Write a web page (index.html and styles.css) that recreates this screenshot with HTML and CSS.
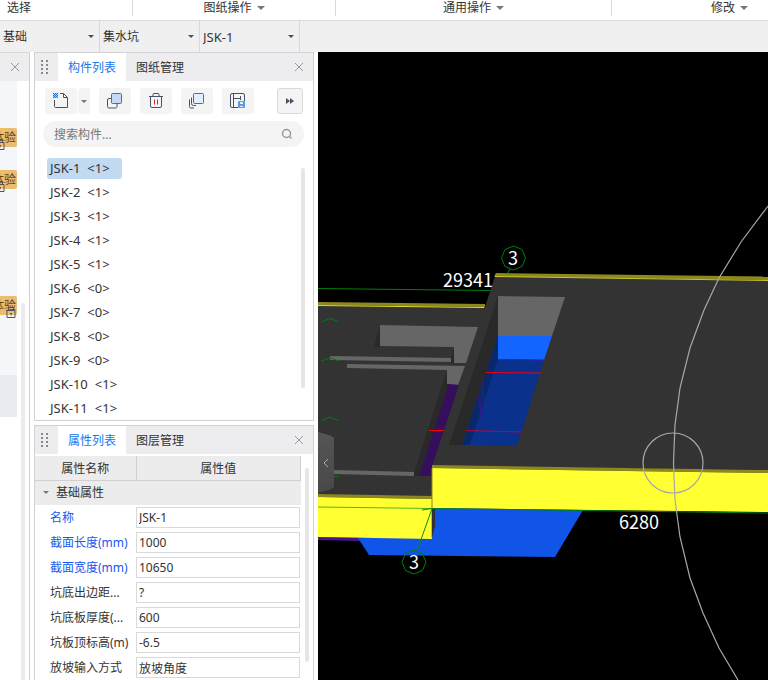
FILE: index.html
```html
<!DOCTYPE html>
<html lang="zh-CN">
<head>
    <meta charset="UTF-8">
    <title>构件建模</title>
    <link rel="stylesheet" href="styles.css">
</head>
<body>
<header class="ribbon">
    <div class="ribbon-group first"><span>选择</span></div>
    <div class="ribbon-group"><button class="ribbon-btn">图纸操作<i class="caret"></i></button></div>
    <div class="ribbon-group"><button class="ribbon-btn">通用操作<i class="caret"></i></button></div>
    <div class="ribbon-group last"><button class="ribbon-btn">修改<i class="caret"></i></button></div>
</header>

<div class="selector-bar">
    <label class="combo"><select aria-label="构件大类"><option>基础</option></select></label>
    <label class="combo"><select aria-label="构件类型"><option>集水坑</option></select></label>
    <label class="combo latin"><select aria-label="构件"><option>JSK-1</option></select></label>
</div>

<main class="workspace">
    <!-- 导航栏 -->
    <aside class="rail">
        <div class="rail-head">
            <button class="close" aria-label="关闭"><svg width="10" height="10" viewBox="0 0 10 10"><path d="M1 1l8 8M9 1l-8 8"/></svg></button>
        </div>
        <div class="rail-body">
            <ul class="rail-list">
                <li></li>
                <li><span class="badge">体验</span><svg class="lock cut" width="10" height="11" viewBox="0 0 10 11"><path d="M2.500 3.500v-3h5v3M1 3.500h8v7h-8zM5 6v2.500M4 6.500h2"/></svg></li>
                <li><span class="badge">体验</span><svg class="lock cut" width="10" height="11" viewBox="0 0 10 11"><path d="M2.500 3.500v-3h5v3M1 3.500h8v7h-8zM5 6v2.500M4 6.500h2"/></svg></li>
                <li></li>
                <li></li>
                <li><span class="badge">体验</span><svg class="lock" width="10" height="11" viewBox="0 0 10 11"><path d="M2.500 3.500v-3h5v3M1 3.500h8v7h-8zM5 6v2.500M4 6.500h2"/></svg></li>
                <li></li>
                <li class="current"></li>
            </ul>
            <div class="rail-scroll"></div>
        </div>
    </aside>

    <div class="panels">
        <!-- 构件列表 -->
        <section class="panel list-panel">
            <div class="panel-head">
                <svg class="grip" width="7" height="14" viewBox="0 0 7 14"><path d="M0 0h2v2H0zM5 0h2v2H5zM0 4h2v2H0zM5 4h2v2H5zM0 8h2v2H0zM5 8h2v2H5zM0 12h2v2H0zM5 12h2v2H5z"/></svg>
                <button class="tab active">构件列表</button>
                <button class="tab">图纸管理</button>
                <button class="close" aria-label="关闭"><svg width="10" height="10" viewBox="0 0 10 10"><path d="M1 1l8 8M9 1l-8 8"/></svg></button>
            </div>
            <div class="toolbar">
                <div class="split">
                    <button class="tool" aria-label="新建">
                        <svg width="18" height="18" viewBox="0 0 18 18"><path class="ink" d="M2.500 8v6.500a1 1 0 0 0 1 1h12v-10l-4-4H8M11.500 1.500v4h4"/><path class="dots-back" d="M1 1h5v5H1z"/><path class="dots" d="M1 1h1v1H1zM3 1h1v1H3zM5 1h1v1H5zM2 2h1v1H2zM4 2h1v1H4zM1 3h1v1H1zM3 3h1v1H3zM5 3h1v1H5zM2 4h1v1H2zM4 4h1v1H4zM1 5h1v1H1zM3 5h1v1H3zM5 5h1v1H5z"/></svg>
                    </button>
                    <button class="tool drop" aria-label="更多新建"><i class="caret small"></i></button>
                </div>
                <button class="tool" aria-label="复制">
                    <svg width="18" height="18" viewBox="0 0 18 18"><path class="ink" d="M5 6.500H3a1.500 1.500 0 0 0-1.500 1.500v6.500A1.500 1.500 0 0 0 3 16h6.500a1.500 1.500 0 0 0 1.500-1.500V12"/><rect class="copy-fill" x="5.500" y="1.500" width="10" height="10" rx="1"/></svg>
                </button>
                <button class="tool" aria-label="删除">
                    <svg width="18" height="18" viewBox="0 0 18 18"><path class="ink" d="M2 4.500h14M6 4.500v-2a1 1 0 0 1 1-1h4a1 1 0 0 1 1 1v2M3.500 4.500V14a1.500 1.500 0 0 0 1.500 1.500h8a1.500 1.500 0 0 0 1.500-1.500V4.500"/><path class="red" d="M7.500 7.500v5M10.500 7.500v5"/></svg>
                </button>
                <button class="tool" aria-label="层间复制">
                    <svg width="18" height="18" viewBox="0 0 18 18"><path class="ink" d="M1.500 7.500v7a1.500 1.500 0 0 0 1.500 1.500h3M3.500 5.500v6a2 2 0 0 0 2 2H8"/><rect class="layer-fill" x="5.500" y="1.500" width="10" height="10" rx="1"/></svg>
                </button>
                <button class="tool" aria-label="存档">
                    <svg width="18" height="18" viewBox="0 0 18 18"><path class="ink" d="M9 15.500H3A1.500 1.500 0 0 1 1.500 14V3A1.500 1.500 0 0 1 3 1.500h11A1.500 1.500 0 0 1 15.500 3v6M4.500 2v13M4.500 6.500h7M11.500 4v4"/><path class="save" d="M9.500 9.500h6v6h-6z"/><path class="save-mark" d="M11 10h3v2h-3zM11 14h3v1h-3z"/></svg>
                </button>
                <button class="tool more" aria-label="更多">
                    <svg width="8" height="6" viewBox="0 0 8 6"><path d="M0 0l4 3-4 3zM4 0l4 3-4 3z"/></svg>
                </button>
            </div>
            <label class="search">
                <input type="text" placeholder="搜索构件..." aria-label="搜索构件">
                <svg width="12" height="12" viewBox="0 0 12 12"><circle cx="5.500" cy="5.500" r="4"/><path d="M8.500 8.500l2 2"/></svg>
            </label>
            <div class="list-wrap">
                <ul class="items">
                    <li class="selected"><span>JSK-1</span><span>&lt;1&gt;</span></li>
                    <li><span>JSK-2</span><span>&lt;1&gt;</span></li>
                    <li><span>JSK-3</span><span>&lt;1&gt;</span></li>
                    <li><span>JSK-4</span><span>&lt;1&gt;</span></li>
                    <li><span>JSK-5</span><span>&lt;1&gt;</span></li>
                    <li><span>JSK-6</span><span>&lt;0&gt;</span></li>
                    <li><span>JSK-7</span><span>&lt;0&gt;</span></li>
                    <li><span>JSK-8</span><span>&lt;0&gt;</span></li>
                    <li><span>JSK-9</span><span>&lt;0&gt;</span></li>
                    <li><span>JSK-10</span><span>&lt;1&gt;</span></li>
                    <li><span>JSK-11</span><span>&lt;1&gt;</span></li>
                </ul>
                <div class="scroll-thumb list-thumb"></div>
            </div>
        </section>

        <!-- 属性列表 -->
        <section class="panel prop-panel">
            <div class="panel-head">
                <svg class="grip" width="7" height="14" viewBox="0 0 7 14"><path d="M0 0h2v2H0zM5 0h2v2H5zM0 4h2v2H0zM5 4h2v2H5zM0 8h2v2H0zM5 8h2v2H5zM0 12h2v2H0zM5 12h2v2H5z"/></svg>
                <button class="tab active">属性列表</button>
                <button class="tab">图层管理</button>
                <button class="close" aria-label="关闭"><svg width="10" height="10" viewBox="0 0 10 10"><path d="M1 1l8 8M9 1l-8 8"/></svg></button>
            </div>
            <div class="prop-wrap">
                <table class="props">
                    <thead>
                    <tr><th class="col-name">属性名称</th><th>属性值</th></tr>
                    </thead>
                    <tbody>
                    <tr class="group"><td colspan="2"><i class="caret small"></i>基础属性</td></tr>
                    <tr><td class="key"><label for="p1">名称</label></td><td><input id="p1" type="text" value="JSK-1"></td></tr>
                    <tr><td class="key"><label for="p2">截面长度(mm)</label></td><td><input id="p2" type="text" value="1000"></td></tr>
                    <tr><td class="key"><label for="p3">截面宽度(mm)</label></td><td><input id="p3" type="text" value="10650"></td></tr>
                    <tr><td><label for="p4">坑底出边距...</label></td><td><input id="p4" type="text" value="?"></td></tr>
                    <tr><td><label for="p5">坑底板厚度(...</label></td><td><input id="p5" type="text" value="600"></td></tr>
                    <tr><td><label for="p6">坑板顶标高(m)</label></td><td><input id="p6" type="text" value="-6.5"></td></tr>
                    <tr><td><label for="p7">放坡输入方式</label></td><td><input id="p7" type="text" value="放坡角度"></td></tr>
                    </tbody>
                </table>
                <div class="scroll-thumb prop-thumb"></div>
            </div>
        </section>
    </div>

    <!-- 三维视图 -->
    <section class="viewport">
        <svg class="scene" viewBox="318 52 450 628" preserveAspectRatio="xMinYMin slice">
            <path d="M318 288.500L491 290.500" stroke="#007d0c"/>
            <!-- 筏板 -->
            <polygon points="495,276 768,280 768,470 432,466 432,497 318,495 318,305 485,307" fill="#333"/>
            <polygon points="318,302 485,304 485,307 318,305" fill="#8c871f"/>
            <path d="M318 305.500L484 307.500" stroke="#e0dc28"/>
            <polygon points="496,273 768,276.500 768,280 494,276.500" fill="#8c871f"/>
            <path d="M495 276.500L768 280.500" stroke="#c8c428"/>
            <!-- 左侧坑 -->
            <polygon points="380,325 478,327 466,363 454,363 454,347 380,346" fill="#666"/>
            <polygon points="380,326 380,347 374,347" fill="#292929"/>
            <polygon points="454,348 454,363 451,363 451,358" fill="#292929"/>
            <polygon points="330,356 451,358 451,362 330,360" fill="#666"/>
            <polygon points="347,364 465,366 458,385 447,384 447,370 347,368" fill="#666"/>
            <polygon points="447,370 447,390 419,476 413,476" fill="#292929"/>
            <polygon points="447,384 459,385 432,466 432,476 419,476 447,390" fill="#350f5c"/>
            <polygon points="334,470 414,472 414,476 334,474" fill="#666"/>
            <!-- 右侧集水坑 -->
            <polygon points="498,296 498,336 462,445 449,445" fill="#292929"/>
            <polygon points="498,296 565,297 552,336 498,336" fill="#666"/>
            <polygon points="498,336 552,336 544,360 498,359" fill="#1464ff"/>
            <polygon points="498,336 498,359 470,445 462,445" fill="#08286e"/>
            <polygon points="498,359 544,360 517,446 470,445" fill="#0a328c"/>
            <path d="M498 359.500L544 360" stroke="#3a22b0"/>
            <path d="M483 380L484 409L479 418M482 383L480 420M478 395L480 408" stroke="#3a1888" fill="none"/>
            <path d="M486 372.500L541 373" stroke="#f00014"/>
            <path d="M429 430.500H444" stroke="#f00"/>
            <path d="M466 430.500L522 432" stroke="#b00c38"/>
            <!-- 侧面 -->
            <polygon points="318,537 360,538 360,541 318,540" fill="#4b1490"/>
            <polygon points="432,508 583,510 555,557 369,555 358,538 432,538" fill="#1155e8"/>
            <polygon points="318,494 432,496 432,499 318,497" fill="#8c871f"/>
            <polygon points="318,497 432,499 432,539 318,537" fill="#ffff32"/>
            <polygon points="432,465 768,470 768,473 432,468" fill="#8c871f"/>
            <polygon points="432,468 768,473 768,512 432,508" fill="#ffff32"/>
            <path d="M432 468V538" stroke="#8c871f"/>
            <polygon points="432,509 435,509 435,526 432,538" fill="#332e38"/>
            <path d="M318 507L432 508.500" stroke="#55b41e"/>
            <path d="M432 508.500L768 513" stroke="#007d28"/>
            <path d="M422 510L432 508.500L417 551M510 269L508 273" stroke="#0a8c14" fill="none"/>
            <g stroke="#007d0c" fill="none">
                <path d="M321 322L330 318.500L339 322M321 361L330 358L339 361M321 421L330 417L339 421M334 476L339 477"/>
                <polygon points="513.500,246 522,249.500 525.500,258 522,266.500 513.500,270 505,266.500 501.500,258 505,249.500"/>
                <polygon points="414,550 422.500,553.500 426,562 422.500,570.500 414,574 405.500,570.500 402,562 405.500,553.500"/>
            </g>
            <!-- 动态观察圆 -->
            <g stroke="#a8a8a8" stroke-width="1.2" fill="none">
                <path d="M768 206L741 242L719 278L704 310L690 348L680 388L675 425L673.500 463L675 500L680 537L690 578L703 613L719 648L738 680"/>
                <circle cx="673" cy="463" r="30"/>
            </g>
            <g class="marks">
                <text x="443" y="287">29341</text>
                <text x="619" y="529">6280</text>
                <text x="508" y="265">3</text>
                <text x="409" y="569">3</text>
            </g>
        </svg>
        <button class="collapse" aria-label="收起">
            <svg width="6" height="10" viewBox="0 0 6 10"><path d="M5 1L1 5l4 4"/></svg>
        </button>
    </section>
</main>
</body>
</html>
```
FILE: styles.css
```css
* {
    box-sizing: border-box;
}

body {
    display: flex;
    flex-direction: column;
    height: 100vh;
    margin: 0;
    overflow: hidden;
    background: #fff;
    color: #333;
    font-family: "Noto Sans", "Noto Sans CJK SC", sans-serif;
    font-size: 12px;
    line-height: 18px;
}

button, input, select {
    margin: 0;
    padding: 0;
    border: none;
    background: none;
    color: inherit;
    font: inherit;
}

button {
    cursor: pointer;
}

ul {
    margin: 0;
    padding: 0;
    list-style: none;
}

svg {
    display: block;
}

.caret {
    display: inline-block;
    border: 4px solid transparent;
    border-top-color: #777;
    border-bottom: none;
}

.caret.small {
    border-width: 3px;
    border-bottom: none;
}

/* 功能区 */
.ribbon {
    display: grid;
    grid-template-columns: 133px 203px 276px 1fr;
    flex: none;
    height: 21px;
    border-bottom: 1px solid #d9d9d9;
    line-height: 14px;
}

.ribbon-group {
    display: flex;
    justify-content: center;
    align-items: flex-start;
    height: 16px;
    padding-top: 1px;
    border-right: 1px solid #d9d9d9;
}

.ribbon-group.first {
    justify-content: flex-start;
    padding-left: 7px;
}

.ribbon-group.last {
    justify-content: flex-start;
    padding-left: 99px;
    border-right: none;
}

.ribbon-btn {
    display: flex;
    align-items: center;
    gap: 5px;
}

.selector-bar {
    display: flex;
    flex: none;
    height: 31px;
    background: #f0f0f0;
}

.combo {
    position: relative;
    display: flex;
    width: 100px;
    border-right: 1px solid #d9d9d9;
}

.combo select {
    flex: 1;
    padding-left: 3px;
    appearance: none;
    outline: none;
}

.combo.latin select {
    font-size: 13px;
}

.combo::after {
    content: "";
    position: absolute;
    right: 5px;
    top: 14px;
    border: 3px solid transparent;
    border-top-color: #4a4f5c;
    border-bottom: none;
    pointer-events: none;
}

.workspace {
    display: flex;
    flex: 1;
    min-height: 0;
    gap: 4px;
}

.close {
    display: flex;
    padding: 5px;
}

.close svg {
    fill: none;
    stroke: #999;
}

.rail {
    display: flex;
    flex-direction: column;
    flex: none;
    width: 30px;
    border-top: 1px solid #d9d9d9;
    border-right: 1px solid #d0d0d0;
}

.rail-head {
    display: flex;
    align-items: center;
    justify-content: center;
    height: 28px;
    background: #ededf0;
}

.rail-body {
    display: flex;
    flex: 1;
    justify-content: space-between;
    padding-right: 4px;
}

.rail-list {
    width: 17px;
    overflow: hidden;
}

.rail-list li {
    position: relative;
    display: flex;
    justify-content: flex-end;
    height: 42px;
    padding-top: 5px;
    background: #f5f6f9;
}

.rail-list .current {
    background: #e9ebf0;
}

.badge {
    flex: none;
    height: 19px;
    padding: 1px 1px 0 6px;
    border-radius: 2px;
    background: linear-gradient(to right, #f2c15c, #e6bc78);
    color: #6b3c10;
}

.lock {
    position: absolute;
    top: 16px;
    right: 1px;
    fill: none;
    stroke: #4a5568;
}

.lock.cut {
    right: 12px;
}

.rail-scroll {
    width: 4px;
    margin-top: 222px;
    border-radius: 2px 2px 0 0;
    background: #ebebeb;
}

.panels {
    display: flex;
    flex-direction: column;
    flex: none;
    gap: 4px;
    width: 280px;
}

.panel {
    border: 1px solid #d2d2d4;
    background: #fff;
}

.prop-panel {
    flex: 1;
    min-height: 0;
    border-bottom: none;
    overflow: hidden;
}

.panel-head {
    display: flex;
    align-items: center;
    height: 28px;
    padding-right: 4px;
    background: #ededf0;
}

.panel-head .close {
    margin-left: auto;
}

.grip {
    margin: 0 10px 0 6px;
    fill: #888;
}

.tab {
    height: 28px;
    padding: 2px 10px 0;
}

.tab.active {
    background: #fff;
    color: #1677ee;
}

.toolbar {
    display: flex;
    gap: 9px;
    padding: 7px 10px;
}

.split {
    display: flex;
    gap: 1px;
}

.tool {
    display: flex;
    align-items: center;
    justify-content: center;
    width: 32px;
    height: 26px;
    border-radius: 3px;
    background: #f4f4f4;
    fill: none;
}

.tool.drop {
    width: 12px;
}

.tool.more {
    width: 26px;
    margin-left: auto;
    border: 1px solid #d9d9d9;
    fill: #4a5068;
}

.ink {
    stroke: #4a5068;
}

.dots-back {
    fill: #a5c8f5;
}

.dots {
    fill: #1677ee;
}

.copy-fill {
    fill: #c5d8f4;
    stroke: #1677ee;
}

.layer-fill {
    fill: #e4effd;
    stroke: #1677ee;
}

.red {
    stroke: #e02020;
}

.save {
    fill: #5a9aea;
    stroke: #5a9aea;
}

.save-mark {
    fill: #e8f1fd;
}

.search {
    display: flex;
    align-items: center;
    height: 26px;
    margin: 0 9px 0 8px;
    padding: 0 11px;
    border-radius: 13px;
    background: #f4f4f4;
}

.search input {
    flex: 1;
    min-width: 0;
    padding-top: 2px;
    outline: none;
}

.search input::placeholder {
    color: #777;
}

.search svg {
    fill: none;
    stroke: #999;
    stroke-width: 1.5;
}

.list-wrap {
    display: flex;
    justify-content: space-between;
    padding: 10px 8px 1px 12px;
}

.items li {
    display: flex;
    align-items: center;
    gap: 7px;
    height: 21px;
    margin-bottom: 3px;
    padding: 0 12px 1px 3px;
    border-radius: 3px;
    font-size: 13px;
}

.items li:last-child {
    margin-bottom: 0;
}

.items .selected {
    width: 75px;
    margin-top: 1px;
    background: #c2d9f2;
}

.scroll-thumb {
    width: 4px;
    border-radius: 2px;
    background: #e6e6e6;
}

.list-thumb {
    height: 220px;
    margin-top: 11px;
}

.prop-wrap {
    display: flex;
    gap: 4px;
    padding-top: 2px;
}

.props {
    width: 266px;
    border-collapse: collapse;
    table-layout: fixed;
}

.props th {
    height: 24px;
    padding: 2px 0 0;
    border-right: 1px solid #d0d0d0;
    border-bottom: 1px solid #d0d0d0;
    background: #ececec;
    font-weight: normal;
}

.props .col-name {
    width: 101px;
}

.props td {
    height: 25px;
    padding: 0;
}

.props td:first-child {
    padding-top: 1px;
    padding-left: 15px;
    white-space: nowrap;
}

.props .group td {
    padding-left: 8px;
    background: #ececec;
}

.group .caret {
    margin-right: 7px;
    vertical-align: 3px;
}

.props .key {
    color: #1a56f0;
}

.props input {
    display: block;
    width: 164px;
    height: 21px;
    padding: 0 2px;
    border: 1px solid #d9d9d9;
}

.prop-thumb {
    height: 194px;
    margin-top: 12px;
}

.viewport {
    position: relative;
    flex: 1;
    min-width: 0;
    background: #000;
}

.scene {
    width: 100%;
    height: 100%;
}

.marks {
    fill: #fff;
    font-family: "Noto Sans CJK SC", sans-serif;
    font-size: 18px;
}

/* 场景上方的收起按钮 */
.collapse {
    position: absolute;
    left: 0;
    top: 380px;
    display: flex;
    align-items: center;
    justify-content: center;
    width: 16px;
    height: 61px;
    background: linear-gradient(#555, #484848);
    clip-path: polygon(0 0, 80% 6%, 100% 10%, 100% 90%, 80% 94%, 0 100%);
}

.collapse svg {
    fill: none;
    stroke: #aaa;
}
```
